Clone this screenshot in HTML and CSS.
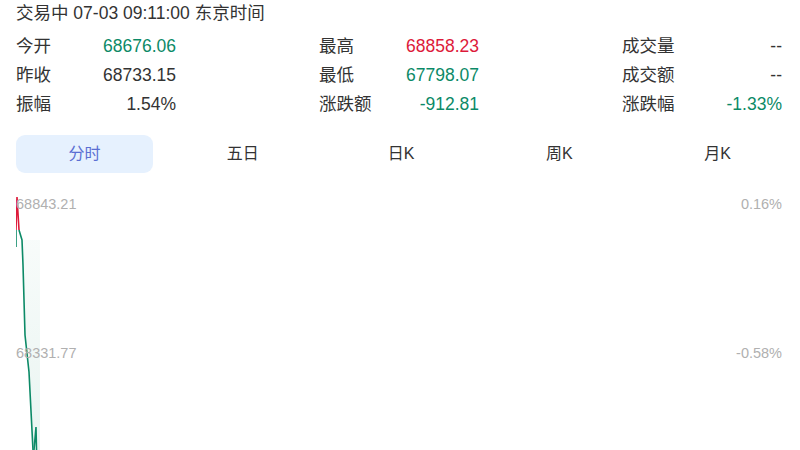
FILE: index.html
```html
<!DOCTYPE html>
<html lang="zh-CN">
<head>
    <meta charset="UTF-8">
    <meta name="viewport" content="width=device-width, initial-scale=1.0">
    <title>行情</title>
    <link rel="stylesheet" href="styles.css">
</head>
<body>
    <div class="quote-panel">
        <div class="status">交易中 07-03 09:11:00 东京时间</div>

        <div class="stats">
            <div class="stat-col">
                <div class="stat"><span class="label">今开</span><span class="value down">68676.06</span></div>
                <div class="stat"><span class="label">昨收</span><span class="value">68733.15</span></div>
                <div class="stat"><span class="label">振幅</span><span class="value">1.54%</span></div>
            </div>
            <div class="stat-col">
                <div class="stat"><span class="label">最高</span><span class="value up">68858.23</span></div>
                <div class="stat"><span class="label">最低</span><span class="value down">67798.07</span></div>
                <div class="stat"><span class="label">涨跌额</span><span class="value down">-912.81</span></div>
            </div>
            <div class="stat-col">
                <div class="stat"><span class="label">成交量</span><span class="value">--</span></div>
                <div class="stat"><span class="label">成交额</span><span class="value">--</span></div>
                <div class="stat"><span class="label">涨跌幅</span><span class="value down">-1.33%</span></div>
            </div>
        </div>

        <div class="tabs">
            <div class="tab active">分时</div>
            <div class="tab">五日</div>
            <div class="tab">日K</div>
            <div class="tab">周K</div>
            <div class="tab">月K</div>
        </div>

        <div class="chart">
            <svg class="chart-line" width="766" height="260" viewBox="0 0 766 260">
                <defs>
                    <linearGradient id="areaFill" x1="0" y1="0" x2="0" y2="1">
                        <stop offset="0" stop-color="#0c8a67" stop-opacity="0.03"/>
                        <stop offset="1" stop-color="#0c8a67" stop-opacity="0.09"/>
                    </linearGradient>
                </defs>
                <polygon points="3,50 6,50 7,75 9,145 13,182 17,260 20,237 21,260 24,260 24,50" fill="url(#areaFill)"/>
                <polyline points="0,57 0,40" fill="none" stroke="#0c8a67" stroke-width="1.6"/>
                <polyline points="0,40 1,7 3,40" fill="none" stroke="#dd1a3a" stroke-width="1.6"/>
                <polyline points="3,40 6,50 7,75 9,145 13,182 17,260" fill="none" stroke="#0c8a67" stroke-width="1.6"/>
                <polyline points="18,260 20,237 20.5,260" fill="none" stroke="#0c8a67" stroke-width="1.6"/>
            </svg>
            <div class="axis-row">
                <span>68843.21</span>
                <span>0.16%</span>
            </div>
            <div class="axis-row">
                <span>68331.77</span>
                <span>-0.58%</span>
            </div>
        </div>
    </div>
</body>
</html>
```

FILE: styles.css
```css
* {
    box-sizing: border-box;
    margin: 0;
    padding: 0;
}

body {
    font-family: "Liberation Sans", Arial, "Noto Sans CJK SC", sans-serif;
    background-color: #ffffff;
    color: #333;
    overflow: hidden;
}

.quote-panel {
    padding: 0 18px 0 16px;
}

.status {
    font-size: 17.5px;
    line-height: 26px;
}

.stats {
    display: flex;
    justify-content: space-between;
    margin-top: 6px;
}

.stat-col {
    width: 160px;
}

.stat {
    display: flex;
    justify-content: space-between;
    font-size: 17.5px;
    line-height: 29px;
}

.value.up {
    color: #dd1a3a;
}

.value.down {
    color: #0c8a67;
}

.tabs {
    display: flex;
    justify-content: space-between;
    margin: 16px -4px 0 0;
}

.tab {
    width: 137px;
    height: 38px;
    line-height: 38px;
    text-align: center;
    font-size: 16px;
    color: #333;
    border-radius: 9px;
}

.tab.active {
    background-color: #e6f1fe;
    color: #5b6fd3;
}

.chart {
    position: relative;
    height: 260px;
    margin-top: 17px;
    padding-top: 5px;
}

.chart-line {
    position: absolute;
    left: 0;
    top: 0;
}

.axis-row {
    position: relative;
    display: flex;
    justify-content: space-between;
    font-size: 14.5px;
    line-height: 18px;
    height: 149px;
    color: #b0b0b0;
}

.axis-row:last-child {
    height: auto;
}
```
